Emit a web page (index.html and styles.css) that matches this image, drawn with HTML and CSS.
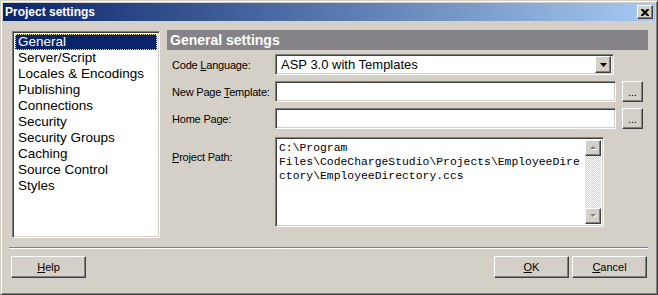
FILE: index.html
```html
<!DOCTYPE html>
<html lang="en">
<head>
    <meta charset="UTF-8">
    <meta name="viewport" content="width=device-width, initial-scale=1.0">
    <title>Project settings</title>
    <link rel="stylesheet" href="styles.css">
</head>
<body>
    <div class="window">
        <div class="titlebar">
            <span class="title">Project settings</span>
            <button class="close" type="button">
                <svg width="8" height="7" viewBox="0 0 8 7">
                    <path d="M0 0h2l2 2 2-2h2v1l-2.5 2.5 2.5 2.5v1h-2l-2-2-2 2h-2v-1l2.5-2.5-2.5-2.5z" fill="#000"/>
                </svg>
            </button>
        </div>
        <div class="client">
            <div class="main">
                <ul class="pages">
                    <li class="selected">General</li>
                    <li>Server/Script</li>
                    <li>Locales &amp; Encodings</li>
                    <li>Publishing</li>
                    <li>Connections</li>
                    <li>Security</li>
                    <li>Security Groups</li>
                    <li>Caching</li>
                    <li>Source Control</li>
                    <li>Styles</li>
                </ul>
                <div class="panel">
                    <div class="panel-head">General settings</div>
                    <div class="row row-first">
                        <label>Code <u>L</u>anguage:</label>
                        <div class="select sunken">
                            <span class="select-value">ASP 3.0 with Templates</span>
                            <span class="drop raised">
                                <svg width="7" height="4" viewBox="0 0 7 4"><path d="M0 0h7l-3.5 4z" fill="#000"/></svg>
                            </span>
                        </div>
                    </div>
                    <div class="row">
                        <label>New Page <u>T</u>emplate:</label>
                        <div class="field sunken"></div>
                        <button class="browse raised" type="button">...</button>
                    </div>
                    <div class="row">
                        <label>Home Page:</label>
                        <div class="field sunken"></div>
                        <button class="browse raised" type="button">...</button>
                    </div>
                    <div class="row row-path">
                        <label><u>P</u>roject Path:</label>
                        <div class="memo sunken">
                            <div class="memo-text">
                                <div>C:\Program</div>
                                <div>Files\CodeChargeStudio\Projects\EmployeeDire</div>
                                <div>ctory\EmployeeDirectory.ccs</div>
                            </div>
                            <div class="vscroll">
                                <span class="arrow raised">
                                    <svg width="7" height="5" viewBox="0 0 7 5"><path d="M1 4h6l-3-3z" fill="#fff"/><path d="M0 3h6l-3-3z" fill="#808080"/></svg>
                                </span>
                                <span class="track"></span>
                                <span class="arrow raised">
                                    <svg width="7" height="5" viewBox="0 0 7 5"><path d="M1 1h6l-3 3z" fill="#fff"/><path d="M0 0h6l-3 3z" fill="#808080"/></svg>
                                </span>
                            </div>
                        </div>
                    </div>
                </div>
            </div>
            <div class="separator"></div>
            <div class="buttons">
                <button class="btn raised" type="button"><u>H</u>elp</button>
                <span class="spacer"></span>
                <button class="btn raised" type="button"><u>O</u>K</button>
                <button class="btn raised" type="button"><u>C</u>ancel</button>
            </div>
        </div>
    </div>
</body>
</html>
```

FILE: styles.css
```css
body {
    margin: 0;
    background: #d4d0c8;
    font-family: "Liberation Sans", Arial, sans-serif;
}
.window {
    width: 658px;
    height: 295px;
    box-sizing: border-box;
    padding: 2px;
    border: 1px solid;
    border-color: #d4d0c8 #404040 #404040 #d4d0c8;
    box-shadow: inset 1px 1px #fff, inset -1px -1px #808080;
    background: #d4d0c8;
    display: flex;
    flex-direction: column;
}
.raised {
    box-sizing: border-box;
    border: 1px solid;
    border-color: #fff #404040 #404040 #fff;
    box-shadow: inset -1px -1px #808080;
    background: #d4d0c8;
}
.sunken {
    box-sizing: border-box;
    border: 1px solid;
    border-color: #808080 #fff #fff #808080;
    box-shadow: inset 1px 1px #404040, inset -1px -1px #d4d0c8;
    background: #fff;
}
.titlebar {
    height: 18px;
    display: flex;
    align-items: center;
    padding: 0 2px 0 2px;
    background: linear-gradient(to right, #0a246a, #a6caf0);
}
.title {
    flex: 1;
    color: #fff;
    font-weight: bold;
    font-size: 12px;
}
.close {
    width: 16px;
    height: 14px;
    padding: 0;
    display: flex;
    align-items: center;
    justify-content: center;
    box-sizing: border-box;
    border: 1px solid;
    border-color: #fff #404040 #404040 #fff;
    box-shadow: inset -1px -1px #808080;
    background: #d4d0c8;
}
.client {
    flex: 1;
    padding: 9px 7px 0 6px;
}
.main {
    display: flex;
    gap: 7px;
    padding-left: 3px;
}
.pages {
    list-style: none;
    margin: 1px 0 0 0;
    padding: 2px;
    width: 148px;
    height: 207px;
    box-sizing: border-box;
    border: 1px solid;
    border-color: #808080 #fff #fff #808080;
    box-shadow: inset 1px 1px #404040, inset -1px -1px #d4d0c8;
    background: #fff;
    font-size: 13.5px;
}
.pages li {
    height: 16px;
    line-height: 16px;
    padding-left: 3px;
    white-space: nowrap;
}
.pages li.selected {
    background: #0a246a;
    color: #fff;
    outline: 1px dotted #f4e79a;
    outline-offset: -1px;
}
.panel {
    flex: 1;
    font-size: 11px;
    letter-spacing: -0.2px;
}
.panel-head {
    height: 20px;
    line-height: 20px;
    padding-left: 3px;
    background: #858387;
    color: #fff;
    font-weight: bold;
    font-size: 14px;
    letter-spacing: 0;
}
.row {
    display: flex;
    align-items: center;
    padding-left: 5px;
    margin-top: 6px;
}
.row-first {
    margin-top: 4px;
}
.row label {
    width: 103px;
    flex-shrink: 0;
}
.select {
    width: 339px;
    height: 21px;
    display: flex;
    align-items: center;
    padding: 2px;
    font-size: 13px;
    letter-spacing: 0;
}
.select-value {
    flex: 1;
    padding-left: 3px;
}
.drop {
    width: 16px;
    height: 17px;
    display: flex;
    align-items: center;
    justify-content: center;
}
.field {
    width: 341px;
    height: 21px;
}
.browse {
    width: 21px;
    height: 21px;
    margin-left: 6px;
    padding: 0 0 3px;
    font-family: "Liberation Sans", Arial, sans-serif;
    font-size: 11px;
    color: #000;
    display: flex;
    align-items: flex-end;
    justify-content: center;
}
.row-path {
    margin-top: 8px;
    align-items: flex-start;
}
.row-path label {
    padding-top: 14px;
}
.memo {
    width: 329px;
    height: 90px;
    padding: 2px;
    display: flex;
}
.memo-text {
    flex: 1;
    padding: 1px 0 0 1px;
    font-family: "Liberation Mono", "Courier New", monospace;
    font-size: 11.4px;
    line-height: 14px;
    letter-spacing: 0;
    white-space: nowrap;
    overflow: hidden;
}
.vscroll {
    width: 16px;
    display: flex;
    flex-direction: column;
}
.vscroll .arrow {
    width: 16px;
    height: 16px;
    display: flex;
    align-items: center;
    justify-content: center;
}
.vscroll .track {
    flex: 1;
    background-color: #d4d0c8;
    background-image: repeating-conic-gradient(#fff 0 25%, #d4d0c8 0 50%);
    background-size: 2px 2px;
}
.separator {
    margin-top: 9px;
    border-top: 1px solid #808080;
    border-bottom: 1px solid #fff;
    height: 0;
}
.buttons {
    display: flex;
    gap: 3px;
    margin-top: 7px;
    padding: 0 1px 0 2px;
}
.spacer {
    flex: 1;
}
.btn {
    width: 75px;
    height: 22px;
    padding: 0;
    font-family: "Liberation Sans", Arial, sans-serif;
    font-size: 11px;
    color: #000;
}
```
